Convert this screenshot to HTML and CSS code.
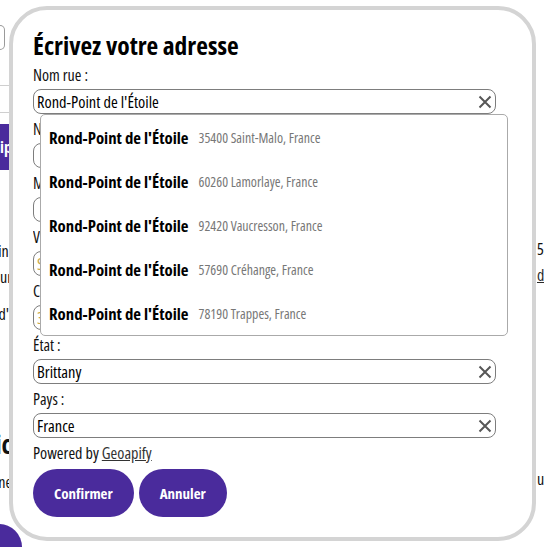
FILE: index.html
```html
<!DOCTYPE html>
<html lang="fr">
<head>
<meta charset="utf-8">
<title>Adresse</title>
<link rel="stylesheet" href="styles.css">
</head>
<body>
<div class="page">
  <div class="side side-left">
    <div class="bg-input"></div>
    <div class="bg-band"></div>
    <div class="bg-btn"><span>Équip</span></div>
    <div class="bg-line l-ni"><span>Le mini</span></div>
    <div class="bg-line l-ur"><span>retour</span></div>
    <div class="bg-line l-d"><span>d'</span></div>
    <div class="bg-line bg-heading l-ic"><span>Public</span></div>
    <div class="bg-line l-e"><span>une</span></div>
    <div class="bg-fab"></div>
  </div>
  <div class="main"></div>
  <div class="side side-right">
    <div class="bg-line r-5"><span>52</span></div>
    <div class="bg-line r-d"><a class="bg-link">de</a></div>
    <div class="bg-line r-u"><span>un</span></div>
  </div>
</div>

<div class="modal">
  <h1 class="modal-title">Écrivez votre adresse</h1>

  <div class="field">
    <div class="field-label">Nom rue :</div>
    <div class="input-wrap">
      <div class="input"><span class="input-value">Rond-Point de l'Étoile</span><svg class="clear" viewBox="0 0 14 14"><path d="M1.5 1.5 L12.5 12.5 M12.5 1.5 L1.5 12.5"/></svg></div>
      <ul class="suggestions">
        <li class="suggestion"><span class="s-main">Rond-Point de l'Étoile</span><span class="s-sub">35400 Saint-Malo, France</span></li>
        <li class="suggestion"><span class="s-main">Rond-Point de l'Étoile</span><span class="s-sub">60260 Lamorlaye, France</span></li>
        <li class="suggestion"><span class="s-main">Rond-Point de l'Étoile</span><span class="s-sub">92420 Vaucresson, France</span></li>
        <li class="suggestion"><span class="s-main">Rond-Point de l'Étoile</span><span class="s-sub">57690 Créhange, France</span></li>
        <li class="suggestion"><span class="s-main">Rond-Point de l'Étoile</span><span class="s-sub">78190 Trappes, France</span></li>
      </ul>
    </div>
  </div>

  <div class="field">
    <div class="field-label">Numéro :</div>
    <div class="input"><span class="input-value"></span></div>
  </div>

  <div class="field">
    <div class="field-label">Mention complémentaire :</div>
    <div class="input"><span class="input-value"></span></div>
  </div>

  <div class="field">
    <div class="field-label">Ville :</div>
    <div class="input"><span class="input-value muted">Saint-Malo</span></div>
  </div>

  <div class="field">
    <div class="field-label">Code postal :</div>
    <div class="input"><span class="input-value muted">35400</span></div>
  </div>

  <div class="field">
    <div class="field-label">État :</div>
    <div class="input"><span class="input-value">Brittany</span><svg class="clear" viewBox="0 0 14 14"><path d="M1.5 1.5 L12.5 12.5 M12.5 1.5 L1.5 12.5"/></svg></div>
  </div>

  <div class="field">
    <div class="field-label">Pays :</div>
    <div class="input"><span class="input-value">France</span><svg class="clear" viewBox="0 0 14 14"><path d="M1.5 1.5 L12.5 12.5 M12.5 1.5 L1.5 12.5"/></svg></div>
  </div>

  <p class="powered">Powered by <a class="powered-link">Geoapify</a></p>

  <div class="actions">
    <button class="btn">Confirmer</button>
    <button class="btn">Annuler</button>
  </div>
</div>
</body>
</html>
```

FILE: styles.css
```css
html, body {
  margin: 0;
  padding: 0;
}

body {
  font-family: "Open Sans", "Roboto", "DejaVu Sans Condensed", sans-serif;
  font-stretch: 75%;
  font-size: 16px;
  color: #111;
  background: #fff;
  height: 547px;
  overflow: hidden;
}

/* ---------- background page ---------- */
.page {
  display: grid;
  grid-template-columns: 12px 1fr 7px;
  height: 547px;
}

.side {
  display: flex;
  flex-direction: column;
  min-width: 0;
}

.bg-input {
  margin-top: 25px;
  width: 4px;
  height: 23px;
  border: 1px solid #9a9a9a;
  border-left: none;
  border-radius: 0 7px 7px 0;
}

.bg-band {
  margin-top: 35px;
  height: 26px;
  border-top: 1px solid #cfcfcf;
  border-bottom: 1px solid #cfcfcf;
}

.bg-btn {
  margin-top: 11px;
  height: 46px;
  background: #4a2b9c;
  color: #fff;
  font-weight: bold;
  display: flex;
  align-items: center;
  justify-content: flex-end;
  overflow: hidden;
  white-space: nowrap;
}

.bg-line {
  height: 20px;
  line-height: 20px;
  display: flex;
  white-space: nowrap;
  overflow: hidden;
}

.side-left .bg-line {
  justify-content: flex-end;
}

.l-ni { margin-top: 71px; }
.l-ur { margin-top: 6px; }
.l-d { margin-top: 17px; padding-right: 3px; }
.l-ic { margin-top: 105px; }
.bg-heading {
  height: 30px;
  line-height: 30px;
  font-size: 26px;
  font-weight: bold;
}
.l-e { margin-top: 13px; }

.bg-fab {
  margin-top: 32px;
  margin-left: -24px;
  width: 46px;
  height: 46px;
  border-radius: 50%;
  background: #4a2b9c;
}

.r-5 { margin-top: 239px; }
.r-d { margin-top: 6px; }
.r-u { margin-top: 184px; }

.bg-link {
  color: #2a2a2a;
  text-decoration: underline;
}

/* ---------- modal ---------- */
.modal {
  position: fixed;
  left: 9px;
  top: 6px;
  width: 527px;
  height: 535px;
  box-sizing: border-box;
  border: 4px solid #d4d4d4;
  border-radius: 38px;
  background: #fff;
  padding: 20px 36px 0 20px;
  z-index: 10;
}

.modal-title {
  margin: 0 0 5px;
  font-size: 25.5px;
  line-height: 30px;
  font-weight: bold;
  color: #000;
}

.field {
  display: flex;
  flex-direction: column;
  gap: 4px;
  margin-bottom: 5px;
}

.field-label {
  height: 20px;
  line-height: 20px;
  color: #111;
  white-space: nowrap;
  overflow: hidden;
}

.input-wrap {
  position: relative;
}

.input {
  height: 25px;
  box-sizing: border-box;
  border: 1px solid #7d7d7d;
  border-radius: 8px;
  padding: 0 3px;
  display: flex;
  align-items: center;
  justify-content: space-between;
  background: #fff;
}

.input-value {
  color: #000;
  white-space: nowrap;
  font-size: 16.4px;
  line-height: 20px;
}

.input-value.muted {
  color: #c9a94a;
}

.clear {
  width: 14px;
  height: 14px;
  flex: none;
}

.clear path {
  fill: none;
  stroke: #575757;
  stroke-width: 2;
}

.suggestions {
  position: absolute;
  top: 100%;
  left: 7px;
  width: 468px;
  box-sizing: border-box;
  margin: 0;
  padding: 0;
  list-style: none;
  background: #fff;
  border: 1px solid #aaaaaa;
  border-radius: 5px;
  z-index: 5;
}

.suggestion {
  height: 44px;
  display: flex;
  align-items: center;
  padding-left: 8px;
  white-space: nowrap;
}

.s-main {
  font-size: 16.8px;
  font-weight: bold;
  color: #000;
}

.s-sub {
  margin-left: 10px;
  font-size: 13.9px;
  color: #777;
}

.powered {
  margin: 0;
  height: 20px;
  line-height: 20px;
  font-size: 16.2px;
  color: #111;
}

.powered-link {
  color: #333;
  text-decoration: underline;
}

.actions {
  margin-top: 6px;
  display: flex;
  gap: 5px;
}

.btn {
  height: 48px;
  padding: 0 21px;
  border: none;
  border-radius: 24px;
  background: #4a2b9c;
  color: #fff;
  font-family: inherit;
  font-stretch: 75%;
  font-size: 15px;
  font-weight: bold;
  cursor: pointer;
}
```
